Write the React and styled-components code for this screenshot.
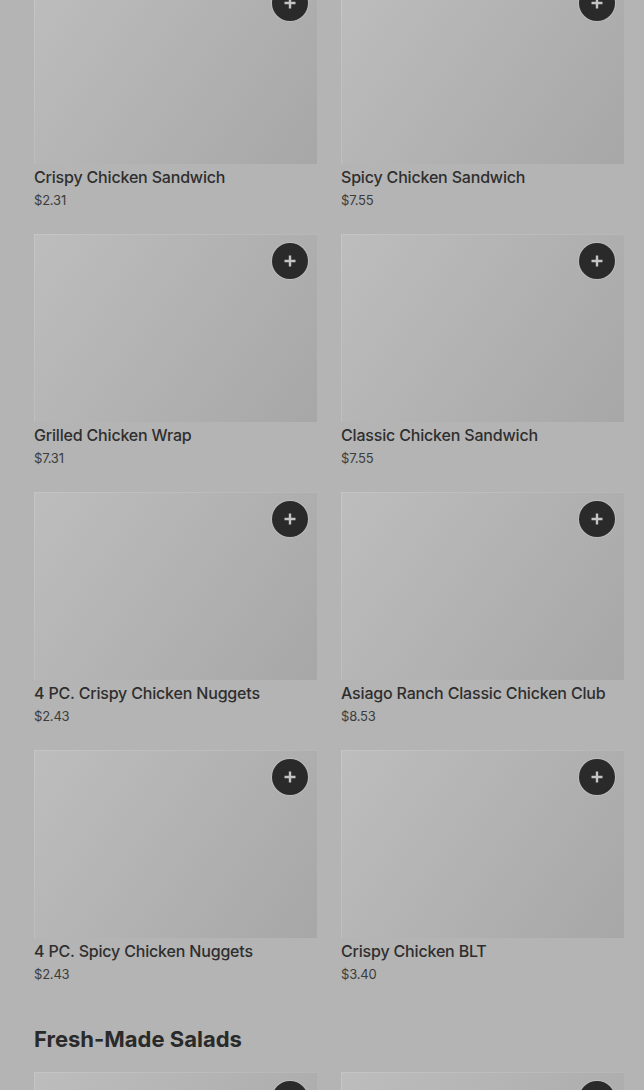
import React from "react";
import styled, { createGlobalStyle } from "styled-components";

const GlobalStyle = createGlobalStyle`
  html, body {
    margin: 0;
    padding: 0;
    background: #b4b4b4;
    overflow: hidden;
  }
  body {
    font-family: Inter, "Noto Sans", sans-serif;
    color: #2c2c2c;
  }
`;

const sections = [
  {
    title: null,
    items: [
      { name: "Crispy Chicken Sandwich", price: "$2.31" },
      { name: "Spicy Chicken Sandwich", price: "$7.55" },
      { name: "Grilled Chicken Wrap", price: "$7.31" },
      { name: "Classic Chicken Sandwich", price: "$7.55" },
      { name: "4 PC. Crispy Chicken Nuggets", price: "$2.43" },
      { name: "Asiago Ranch Classic Chicken Club", price: "$8.53" },
      { name: "4 PC. Spicy Chicken Nuggets", price: "$2.43" },
      { name: "Crispy Chicken BLT", price: "$3.40" },
    ],
  },
  {
    title: "Fresh-Made Salads",
    items: [
      { name: "Apple Pecan Salad", price: "$6.99" },
      { name: "Cobb Salad", price: "$6.99" },
    ],
  },
];

const Page = styled.main`
  padding: 0 20px 0 34px;
  margin-top: -24px;
`;

const Section = styled.section`
  & + & {
    margin-top: 41px;
  }
`;

const Heading = styled.h2`
  margin: 0 0 19px;
  font-size: 22px;
  line-height: 28px;
  font-weight: 700;
  letter-spacing: 0;
  color: #2a2a2a;
`;

const Grid = styled.div`
  display: grid;
  grid-template-columns: 283px 283px;
  column-gap: 24px;
  row-gap: 24px;
`;

const Card = styled.div`
  display: flex;
  flex-direction: column;
`;

const Thumb = styled.div`
  position: relative;
  height: 188px;
  background: linear-gradient(125deg, #bdbdbd 0%, #b2b2b2 50%, #a7a7a7 100%);
  box-shadow: inset 1px 1px 0 rgba(255, 255, 255, 0.12);
`;

const AddButton = styled.button`
  position: absolute;
  top: 9px;
  right: 9px;
  width: 36px;
  height: 36px;
  border-radius: 50%;
  border: none;
  padding: 0;
  background: #2a2a2a;
  box-shadow: 0 0 0 1px rgba(255, 255, 255, 0.18);
  display: flex;
  align-items: center;
  justify-content: center;
  cursor: pointer;
`;

const Name = styled.div`
  margin-top: 2px;
  font-size: 16px;
  line-height: 22px;
  font-weight: 500;
  letter-spacing: -0.18px;
  color: #2e2e2e;
  white-space: nowrap;
`;

const Price = styled.div`
  margin-top: 2px;
  font-size: 13px;
  line-height: 20px;
  letter-spacing: -0.2px;
  color: #3c3c3c;
`;

const PlusIcon = () => (
  <svg width="14" height="14" viewBox="0 0 14 14">
    <path d="M7 1.5v11M1.5 7h11" stroke="#c4c4c4" strokeWidth="2.4" />
  </svg>
);

export default function App() {
  return (
    <>
      <GlobalStyle />
      <Page>
        {sections.map((s, i) => (
          <Section key={i}>
            {s.title && <Heading>{s.title}</Heading>}
            <Grid>
              {s.items.map((item) => (
                <Card key={item.name}>
                  <Thumb>
                    <AddButton aria-label="Add">
                      <PlusIcon />
                    </AddButton>
                  </Thumb>
                  <Name>{item.name}</Name>
                  <Price>{item.price}</Price>
                </Card>
              ))}
            </Grid>
          </Section>
        ))}
      </Page>
    </>
  );
}
